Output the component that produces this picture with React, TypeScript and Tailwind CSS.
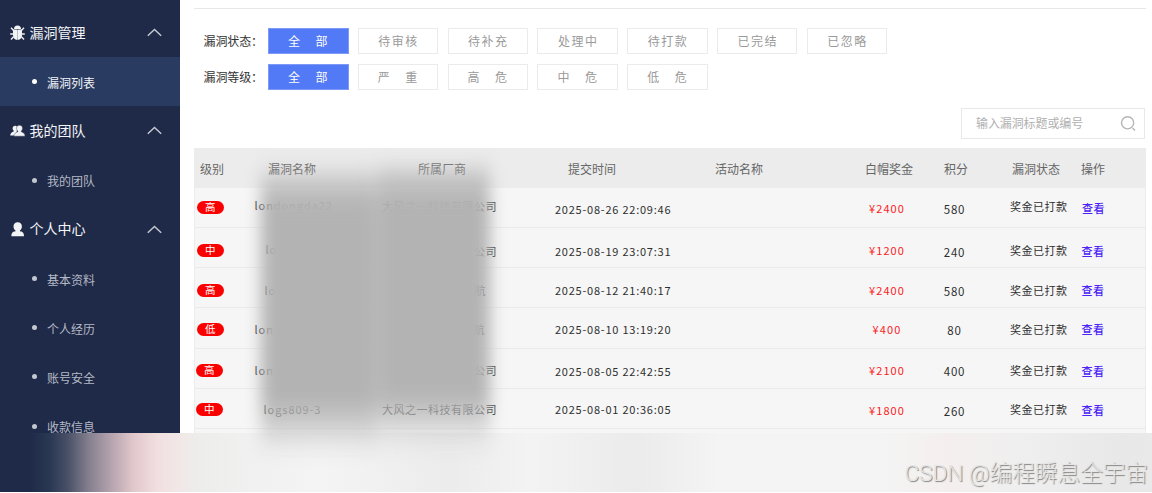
import React from "react";

function BugIcon() {
  return (
    <svg width="15" height="16" viewBox="0 0 15 16" fill="none" className="shrink-0">
      <path d="M4 4.100a3.500 3.500 0 0 1 7 0z" fill="#f2f3f5" />
      <path d="M3 4.600h4.200v10.400C4.500 14.800 3 12.800 3 10zM7.800 4.600H12v5.400c0 2.800-1.500 4.800-4.200 5z" fill="#f2f3f5" />
      <path d="M7.500 5v9.500" stroke="#c9ccd4" strokeWidth=".8" />
      <path d="M1 2.800l2.600 2.800M14 2.800l-2.600 2.800M.2 8.900h3.200M14.800 8.900h-3.200M1 14.600l2.800-3M14 14.600l-2.800-3" stroke="#e9ebef" strokeWidth="1.500" />
    </svg>
  );
}

function TeamIcon() {
  return (
    <svg width="15" height="12" viewBox="0 0 15 12" fill="#f2f3f5" className="shrink-0">
      <path d="M5.200.8c1.500 0 2.500 1 2.500 2.600 0 1-.4 1.800-1 2.300v4.800H.2c0-2.800 2-3.400 3.500-4.100v-.7c-.7-.5-1.100-1.300-1.100-2.300C2.600 1.800 3.700.8 5.200.8z" />
      <path d="M9.500.2c1.900 0 3 1.200 3 3 0 1.200-.5 2.200-1.200 2.900v.7c1.600.8 3.700 1.200 3.700 4.400H4c0-3.200 2.300-3.600 3.800-4.400v-.7C7 5.400 6.500 4.400 6.500 3.200c0-1.800 1.100-3 3-3z" stroke="#1f2a48" strokeWidth=".4" />
    </svg>
  );
}

function UserIcon() {
  return (
    <svg width="15" height="15" viewBox="0 0 15 15" fill="#f2f3f5" className="shrink-0">
      <path d="M7.700.2c2.700 0 4.200 1.700 4.200 4.100 0 2-.7 3.500-2 4.300v.6c2.400.3 4.100 1.200 4.100 5H1.400c0-3.800 1.700-4.700 4.100-5v-.6c-1.300-.8-2-2.300-2-4.300C3.500 1.900 5 .2 7.700.2z" />
    </svg>
  );
}

function Group({ icon, label }: { icon: React.ReactNode; label: string }) {
  return (
    <div className="flex h-[49.200px] shrink-0 items-center pl-[10px] pr-[17.500px] text-[14px] text-[#f4f5f7]">
      <span className="flex w-[19.500px] items-center">{icon}</span>
      <span className="flex-1 whitespace-nowrap pb-px">{label}</span>
      <svg width="15" height="9" viewBox="0 0 15 9" fill="none" stroke="#c3c7d0" strokeWidth="1.500">
        <path d="M.8 7.800L7.500 1.500l6.700 6.300" />
      </svg>
    </div>
  );
}

function Item({ label, active }: { label: string; active?: boolean }) {
  return (
    <div className={`flex h-[49.200px] shrink-0 items-center pl-[32px] text-[12px] ${active ? "bg-[#293b60] text-[#f4f5f7]" : "text-[#b4b9c5]"}`}>
      <span className={`mr-[10px] h-[5px] w-[5px] rounded-full ${active ? "bg-white" : "bg-[#c3c7d0]"}`} />
      <span className="mt-[2px]">{label}</span>
    </div>
  );
}

function Filter({ label, options, className }: { label: string; options: string[]; className: string }) {
  return (
    <div className={`flex h-[26px] items-center pl-[9.500px] ${className}`}>
      <span className="w-[64.500px] whitespace-nowrap text-[12px] tracking-[-0.100px] text-[#333]">{label}</span>
      <div className="flex gap-[9.300px]">
        {options.map((o, i) => (
          <div
            key={o}
            className={`flex h-[26px] w-[80.500px] items-center justify-center whitespace-pre border text-[12px] ${i === 0 ? "border-[#7d9af8] bg-[#5279f6] text-white" : "border-[#ebebeb] text-[#9a9a9a]"}`}
          >
            {o.length === 2 ? (
              <span className="mr-px flex gap-[15.500px]"><span>{o[0]}</span><span>{o[1]}</span></span>
            ) : (
              <span className="mr-[-1px] tracking-[1.500px]">{o}</span>
            )}
          </div>
        ))}
      </div>
    </div>
  );
}

type Row = {
  level: string; name: string; nameCls: string; vendor: string; vendorCls: string;
  date: string; dateCls: string; amount: string; amountCls: string;
  points: string; pointsCls: string; statusCls: string; actionCls: string; badgeCls: string; h: string;
};

const rows: Row[] = [
  { level: "高", name: "londongda22", nameCls: "pt-[9px]", vendor: "大风之一科技有限公司", vendorCls: "pt-[10px]", date: "2025-08-26 22:09:46", dateCls: "pt-[13px]", amount: "¥2400", amountCls: "pt-[12px]", points: "580", pointsCls: "pt-[13px]", statusCls: "pt-[10px]", actionCls: "pt-[12px] pl-[21px]", badgeCls: "mt-[13px] ml-[1.500px]", h: "h-[40px]" },
  { level: "中", name: "lo", nameCls: "pt-[13px] pl-[11px]", vendor: "公司", vendorCls: "pt-[15px]", date: "2025-08-19 23:07:31", dateCls: "pt-[15px]", amount: "¥1200", amountCls: "pt-[14px]", points: "240", pointsCls: "pt-[16px]", statusCls: "pt-[14px]", actionCls: "pt-[15px] pl-[20.500px]", badgeCls: "mt-[16px] ml-[1.500px]", h: "h-[40px]" },
  { level: "高", name: "lo", nameCls: "pt-[14px] pl-[10px]", vendor: "航", vendorCls: "pt-[14px] pr-[11px]", date: "2025-08-12 21:40:17", dateCls: "pt-[14px]", amount: "¥2400", amountCls: "pt-[14px]", points: "580", pointsCls: "pt-[15px]", statusCls: "pt-[14px]", actionCls: "pt-[14px] pl-[20.500px]", badgeCls: "mt-[16px] ml-[1.500px]", h: "h-[40px]" },
  { level: "低", name: "lon", nameCls: "pt-[13px]", vendor: "航", vendorCls: "pt-[13px] pr-[12px]", date: "2025-08-10 13:19:20", dateCls: "pt-[13px]", amount: "¥400", amountCls: "pt-[13px]", points: "80", pointsCls: "pt-[14px]", statusCls: "pt-[13px]", actionCls: "pt-[13px] pl-[20.500px]", badgeCls: "mt-[15px] ml-[1.500px]", h: "h-[41px]" },
  { level: "高", name: "lon", nameCls: "pt-[13px]", vendor: "公司", vendorCls: "pt-[13px]", date: "2025-08-05 22:42:55", dateCls: "pt-[14px]", amount: "¥2100", amountCls: "pt-[13px]", points: "400", pointsCls: "pt-[14px]", statusCls: "pt-[13px]", actionCls: "pt-[14px] pl-[20.500px]", badgeCls: "mt-[15px] ml-[0.500px]", h: "h-[40px]" },
  { level: "中", name: "logs809-3", nameCls: "pt-[12px] pl-[9px]", vendor: "大风之一科技有限公司", vendorCls: "pt-[12px]", date: "2025-08-01 20:36:05", dateCls: "pt-[12px]", amount: "¥1800", amountCls: "pt-[13px]", points: "260", pointsCls: "pt-[14px]", statusCls: "pt-[12px]", actionCls: "pt-[13px] pl-[20.500px]", badgeCls: "mt-[14px] ml-[0.500px]", h: "h-[40px]" },
];

function TableRow({ r }: { r: Row }) {
  return (
    <div className={`grid grid-cols-[59.500px_126.500px_116px_58px_290px_64px_81px_71px_1fr] items-start whitespace-nowrap border-b border-[#eaeaea] text-[11px] leading-[17px] text-[#2f2f2f] ${r.h}`}>
      <div className={`flex h-[13px] w-[27.500px] items-center justify-center rounded-full bg-[#fb0000] text-[10.500px] leading-none text-white ${r.badgeCls}`}>{r.level}</div>
      <div className={`tracking-[0.950px] ${r.nameCls}`}>{r.name}</div>
      <div className={`text-right tracking-[0.500px] ${r.vendorCls}`}>{r.vendor}</div>
      <div />
      <div className={`tracking-[0.770px] ${r.dateCls}`}>{r.date}</div>
      <div className={`-ml-[8px] w-[100px] text-center tracking-[1.100px] text-[#fa1c1c] ${r.amountCls}`}>{r.amount}</div>
      <div className={`pl-[4px] text-[11.500px] tracking-[0.800px] ${r.pointsCls}`}><span className="block w-[83px] text-center">{r.points}</span></div>
      <div className={`pl-[20px] tracking-[0.500px] ${r.statusCls}`}>{"奖金已打款"}</div>
      <div className={`font-medium tracking-[0.500px] text-[#4b25f5] ${r.actionCls}`}>{"查看"}</div>
    </div>
  );
}

const heads = ["级别", "漏洞名称", "所属厂商", "提交时间", "活动名称", "白帽奖金", "积分", "漏洞状态", "操作"];

export default function App() {
  return (
    <div className="relative flex h-[493px] w-[1152px] flex-col overflow-hidden bg-white font-['Noto_Sans_CJK_SC',sans-serif]">
      <div className="flex h-[433px] shrink-0">
        <aside className="flex w-[179.500px] shrink-0 flex-col overflow-hidden bg-[#1f2a48] pt-[8px]">
          <Group icon={<BugIcon />} label="漏洞管理" />
          <Item label="漏洞列表" active />
          <Group icon={<TeamIcon />} label="我的团队" />
          <Item label="我的团队" />
          <Group icon={<UserIcon />} label="个人中心" />
          <Item label="基本资料" />
          <Item label="个人经历" />
          <Item label="账号安全" />
          <Item label="收款信息" />
        </aside>
        <main className="ml-[14.500px] flex w-[952px] flex-col overflow-hidden">
          <div className="mt-[8px] h-px shrink-0 bg-[#e8e8e8]" />
          <Filter className="mt-[19px] shrink-0" label="漏洞状态：" options={["全部", "待审核", "待补充", "处理中", "待打款", "已完结", "已忽略"]} />
          <Filter className="mt-[10px] shrink-0" label="漏洞等级：" options={["全部", "严重", "高危", "中危", "低危"]} />
          <div className="ml-auto mr-px mt-[18px] flex h-[31px] w-[184px] shrink-0 items-center justify-between border border-[#e8e8e8] pl-[14px] pr-[7px] text-[12px] text-[#b0b0b0]">
            <span className="pb-px tracking-[-0.100px]">输入漏洞标题或编号</span>
            <svg width="17" height="17" viewBox="0 0 17 17" fill="none" stroke="#b5b5b5" strokeWidth="1.400">
              <circle cx="7.600" cy="7.800" r="6.100" />
              <path d="M12.600 13.100l2.400 2.500" />
            </svg>
          </div>
          <div className="mt-[9px] grid h-[40px] shrink-0 grid-cols-[68px_150px_150px_147px_150px_79px_68px_69px_1fr] items-center whitespace-nowrap bg-[#ececec] pl-[6px] pt-px text-[12px] text-[#666]">
            {heads.map((h) => <span key={h}>{h}</span>)}
          </div>
          <div className="shrink-0 border-x border-[#ececec] bg-[#f6f6f6]">
            {rows.map((r) => <TableRow key={r.date} r={r} />)}
            <div className="h-[5px]" />
          </div>
        </main>
      </div>
      <footer className="flex h-[59px] shrink-0 items-end justify-end bg-[linear-gradient(90deg,#1f2a48_0px,#1f2a48_30px,#2a3853_50px,#474f66_67px,#85808f_89px,#b5a3ae_111px,#e0c7cb_133px,#f2dfe0_158px,#f1e7e6_177px,#ededec_200px,#f1f1f1_260px,#f4f4f4_320px,#ececec_450px,#f3f3f3_530px,#ebebeb_635px,#f4f4f4_720px,#f4f4f4_880px,#f4efee_945px,#efefef_1020px,#e8e8e8_1120px,#e9e9e9_1152px)] pb-[2px] pr-[4px]">
        <span className="z-10 whitespace-nowrap font-['Roboto','Noto_Sans_CJK_SC',sans-serif] text-[22.700px] font-light leading-[32px] tracking-[-0.050px] text-[#e6e6e6] [text-shadow:1px_1px_1px_#808080]">CSDN @编程瞬息全宇宙</span>
      </footer>
      <div className="pointer-events-none absolute left-[261px] top-[156px] flex h-[306px] gap-px blur-[8px]">
        <div className="w-[116px] bg-[linear-gradient(180deg,transparent_0px,#b3b3b333_14px,#b3b3b399_26px,#b3b3b3e0_38px,#b3b3b3_54px,#b3b3b3_240px,#b3b3b3d0_256px,#b3b3b388_272px,#b3b3b333_286px,transparent_304px)]" />
        <div className="w-[112px] bg-[linear-gradient(180deg,transparent_0px,#b3b3b333_8px,#b3b3b3aa_22px,#b3b3b3e6_36px,#b3b3b3_50px,#b3b3b3_236px,#b3b3b3c4_253px,#b3b3b378_268px,#b3b3b320_284px,transparent_304px)]" />
      </div>
    </div>
  );
}
